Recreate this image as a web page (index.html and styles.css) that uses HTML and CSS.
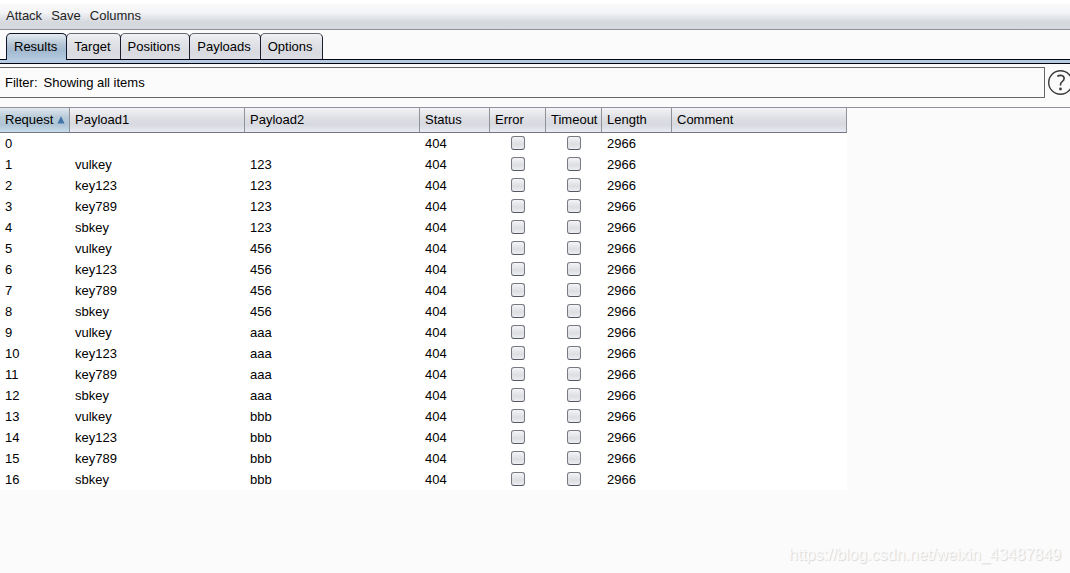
FILE: index.html
```html
<!DOCTYPE html>
<html lang="en">
<head>
<meta charset="utf-8">
<title>Intruder attack</title>
<link rel="stylesheet" href="styles.css">
</head>
<body>
<nav class="menubar">
<button class="menu" type="button">Attack</button>
<button class="menu" type="button">Save</button>
<button class="menu" type="button">Columns</button>
</nav>
<div class="tabs" role="tablist">
<button class="tab tab-active" type="button" role="tab" aria-selected="true">Results</button>
<button class="tab" type="button" role="tab">Target</button>
<button class="tab" type="button" role="tab">Positions</button>
<button class="tab" type="button" role="tab">Payloads</button>
<button class="tab" type="button" role="tab">Options</button>
</div>
<div class="tab-strip"></div>
<div class="filter-row">
<button class="filter" type="button"><span>Filter:</span><span>Showing all items</span></button>
<button class="help" type="button" aria-label="Help">
<svg width="26" height="26" viewBox="0 0 26 26" fill="none" stroke="#3c3a38">
<circle cx="12.5" cy="12.5" r="11.8" stroke-width="1.4"/>
<path d="M9.3 6.4c2.7-1.7 6.8-1.2 6.8 2 0 3-3.6 3.2-3.6 6v1" stroke-width="1.6"/>
<circle cx="12.5" cy="19" r="1.4" fill="#3c3a38" stroke="none"/>
</svg>
</button>
</div>
<main class="results">
<table class="grid">
<colgroup><col class="c-request"><col class="c-payload"><col class="c-payload"><col class="c-status"><col class="c-flag"><col class="c-flag"><col class="c-status"><col class="c-payload"></colgroup>
<thead>
<tr><th class="sorted" aria-sort="ascending"><span class="sort-label">Request<svg width="8" height="8" viewBox="0 0 8 8"><path d="M4 0L7.5 7.5H.5z" fill="#4475a8"/></svg></span></th><th>Payload1</th><th>Payload2</th><th>Status</th><th>Error</th><th>Timeout</th><th>Length</th><th>Comment</th></tr>
</thead>
<tbody>
<tr><td>0</td><td></td><td></td><td>404</td><td class="flag"><input type="checkbox" aria-label="Error 0"></td><td class="flag"><input type="checkbox" aria-label="Timeout 0"></td><td>2966</td><td></td></tr>
<tr><td>1</td><td>vulkey</td><td>123</td><td>404</td><td class="flag"><input type="checkbox" aria-label="Error 1"></td><td class="flag"><input type="checkbox" aria-label="Timeout 1"></td><td>2966</td><td></td></tr>
<tr><td>2</td><td>key123</td><td>123</td><td>404</td><td class="flag"><input type="checkbox" aria-label="Error 2"></td><td class="flag"><input type="checkbox" aria-label="Timeout 2"></td><td>2966</td><td></td></tr>
<tr><td>3</td><td>key789</td><td>123</td><td>404</td><td class="flag"><input type="checkbox" aria-label="Error 3"></td><td class="flag"><input type="checkbox" aria-label="Timeout 3"></td><td>2966</td><td></td></tr>
<tr><td>4</td><td>sbkey</td><td>123</td><td>404</td><td class="flag"><input type="checkbox" aria-label="Error 4"></td><td class="flag"><input type="checkbox" aria-label="Timeout 4"></td><td>2966</td><td></td></tr>
<tr><td>5</td><td>vulkey</td><td>456</td><td>404</td><td class="flag"><input type="checkbox" aria-label="Error 5"></td><td class="flag"><input type="checkbox" aria-label="Timeout 5"></td><td>2966</td><td></td></tr>
<tr><td>6</td><td>key123</td><td>456</td><td>404</td><td class="flag"><input type="checkbox" aria-label="Error 6"></td><td class="flag"><input type="checkbox" aria-label="Timeout 6"></td><td>2966</td><td></td></tr>
<tr><td>7</td><td>key789</td><td>456</td><td>404</td><td class="flag"><input type="checkbox" aria-label="Error 7"></td><td class="flag"><input type="checkbox" aria-label="Timeout 7"></td><td>2966</td><td></td></tr>
<tr><td>8</td><td>sbkey</td><td>456</td><td>404</td><td class="flag"><input type="checkbox" aria-label="Error 8"></td><td class="flag"><input type="checkbox" aria-label="Timeout 8"></td><td>2966</td><td></td></tr>
<tr><td>9</td><td>vulkey</td><td>aaa</td><td>404</td><td class="flag"><input type="checkbox" aria-label="Error 9"></td><td class="flag"><input type="checkbox" aria-label="Timeout 9"></td><td>2966</td><td></td></tr>
<tr><td>10</td><td>key123</td><td>aaa</td><td>404</td><td class="flag"><input type="checkbox" aria-label="Error 10"></td><td class="flag"><input type="checkbox" aria-label="Timeout 10"></td><td>2966</td><td></td></tr>
<tr><td>11</td><td>key789</td><td>aaa</td><td>404</td><td class="flag"><input type="checkbox" aria-label="Error 11"></td><td class="flag"><input type="checkbox" aria-label="Timeout 11"></td><td>2966</td><td></td></tr>
<tr><td>12</td><td>sbkey</td><td>aaa</td><td>404</td><td class="flag"><input type="checkbox" aria-label="Error 12"></td><td class="flag"><input type="checkbox" aria-label="Timeout 12"></td><td>2966</td><td></td></tr>
<tr><td>13</td><td>vulkey</td><td>bbb</td><td>404</td><td class="flag"><input type="checkbox" aria-label="Error 13"></td><td class="flag"><input type="checkbox" aria-label="Timeout 13"></td><td>2966</td><td></td></tr>
<tr><td>14</td><td>key123</td><td>bbb</td><td>404</td><td class="flag"><input type="checkbox" aria-label="Error 14"></td><td class="flag"><input type="checkbox" aria-label="Timeout 14"></td><td>2966</td><td></td></tr>
<tr><td>15</td><td>key789</td><td>bbb</td><td>404</td><td class="flag"><input type="checkbox" aria-label="Error 15"></td><td class="flag"><input type="checkbox" aria-label="Timeout 15"></td><td>2966</td><td></td></tr>
<tr><td>16</td><td>sbkey</td><td>bbb</td><td>404</td><td class="flag"><input type="checkbox" aria-label="Error 16"></td><td class="flag"><input type="checkbox" aria-label="Timeout 16"></td><td>2966</td><td></td></tr>
</tbody>
</table>
</main>
<div class="watermark">https://blog.csdn.net/weixin_43487849</div>
</body>
</html>
```

FILE: styles.css
```css
* {
  box-sizing: border-box;
}

body {
  margin: 0;
  min-height: 100vh;
  display: flex;
  flex-direction: column;
  background: #fbfbfb;
  color: #000;
  font: 13px/16px "Liberation Sans", Arial, sans-serif;
}

button {
  margin: 0;
  padding: 0;
  border: 0;
  background: none;
  color: inherit;
  font: inherit;
}

.menubar {
  display: flex;
  gap: 9px;
  padding: 8px 6px 5px;
  border-bottom: 1px solid #8f9299;
  background: linear-gradient(#fff 3px, #f9f9fa 4px, #f4f5f7 12px, #e4e6ea 17px, #d5d8dd 22px, #d6d9df);
}

.menu {
  color: #232323;
}

.tabs {
  display: flex;
  padding: 3px 6px 0;
}

.tab {
  height: 26px;
  margin-right: -1px;
  padding: 0 9px 0 7px;
  border: 1px solid #1d1d30;
  border-top-color: #6a6a72;
  border-bottom: 0;
  border-radius: 5px 5px 0 0;
  background: linear-gradient(#f1f2f5, #e3e4e8 30%, #d9dae0 75%, #dedfe6);
}

.tab-active {
  position: relative;
  height: 27px;
  margin-bottom: -1px;
  border-color: #10142c;
  background: linear-gradient(#e4ebf1, #b4c6d6 40%, #a3b9cf 65%, #b5cbe1);
}

.tab-strip {
  height: 5px;
  border: 1px solid #05050f;
  border-width: 1px 0;
  background: #b5cbe3;
}

.filter-row {
  display: flex;
  gap: 3px;
  padding: 3px 0 9px;
}

.filter {
  flex: 1;
  display: flex;
  gap: 6px;
  padding: 7px 5px 6px;
  border: 1px solid #66666a;
  border-left: 0;
}

.help {
  width: 22px;
  display: flex;
  align-items: center;
  overflow: hidden;
}

.help svg {
  flex: none;
}

.results {
  border-top: 1px solid #92929e;
}

.grid {
  width: 847px;
  table-layout: fixed;
  border-collapse: separate;
  border-spacing: 0;
  background: #fff;
}

.c-request,
.c-status {
  width: 70px;
}

.c-payload {
  width: 175px;
}

.c-flag {
  width: 56px;
}

.grid th {
  height: 25px;
  padding: 0 0 1px 5px;
  border-right: 1px solid #8f9299;
  border-bottom: 1px solid #73757f;
  background: linear-gradient(#f4f4f6, #dfe0e5 40%, #d7d9df 70%, #e8ebf4);
  font-weight: 400;
  text-align: left;
  white-space: nowrap;
}

.grid .sorted {
  background: linear-gradient(#dfe7ee, #b7cad8 40%, #afc5d5 70%, #c8dcec);
}

.sort-label {
  display: flex;
  align-items: center;
  gap: 4px;
}

.grid td {
  height: 21px;
  padding: 0 0 0 5px;
}

.grid .flag {
  padding: 0 0 1px;
}

.flag input {
  appearance: none;
  display: block;
  width: 14px;
  height: 14px;
  margin: 0 auto;
  border: 1px solid #777a83;
  border-bottom-color: #555863;
  border-radius: 3px;
  background: linear-gradient(#f4f4f6, #dcdee2 60%, #eceef2);
}

.watermark {
  margin-top: auto;
  padding: 0 9px 8px;
  color: #fbfbfb;
  font-size: 16px;
  line-height: 20px;
  text-align: right;
  text-shadow: 1px 1px 1px #d6d6d6;
}
```
